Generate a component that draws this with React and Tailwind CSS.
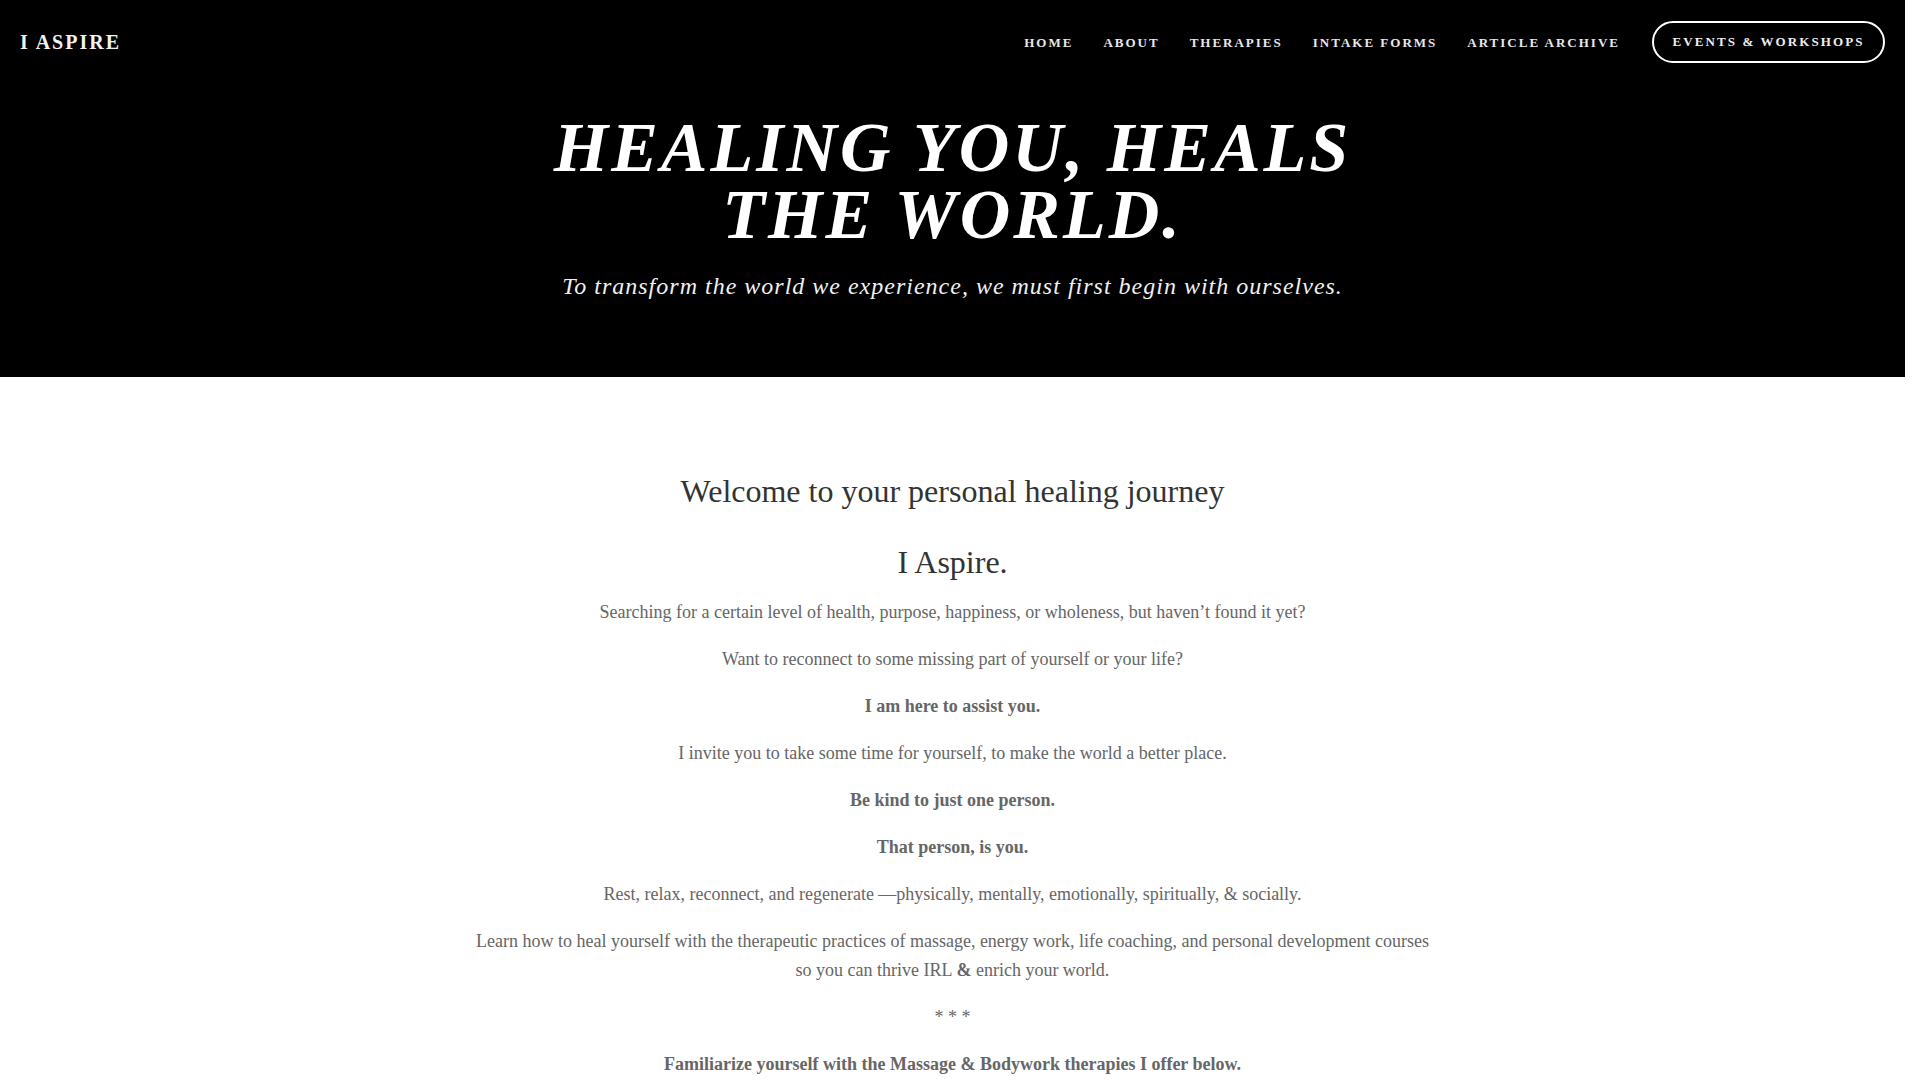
const navLinks = ["Home", "About", "Therapies", "Intake Forms", "Article Archive"];

const Header = () => {
  return (
    <header className="bg-black text-white">
      <nav className="flex items-center justify-between h-[84px] pl-[20px] pr-[20px]">
        <a href="#" className="text-[20px] font-bold tracking-[2px] text-[#f2f2f2] uppercase">
          I Aspire
        </a>
        <div className="flex items-center">
          <ul className="flex items-center gap-[30px] mr-[32px]">
            {navLinks.map((link) => (
              <li key={link}>
                <a
                  href="#"
                  className="text-[13px] font-bold uppercase tracking-[2px] text-[#e8e8e8]"
                >
                  {link}
                </a>
              </li>
            ))}
          </ul>
          <a
            href="#"
            className="flex items-center justify-center h-[42px] w-[233px] rounded-full border-2 border-white text-[13px] font-bold uppercase tracking-[2.1px] text-[#eee]"
          >
            Events &amp; Workshops
          </a>
        </div>
      </nav>

      <div className="flex flex-col items-center pt-[30px] pb-[73px] text-center">
        <h1 className="text-[70px] leading-[67px] font-bold italic uppercase tracking-[3px]">
          Healing you, heals
          <br />
          the world.
        </h1>
        <p className="mt-[20px] text-[24px] leading-[36px] italic tracking-[1px] text-[#f0f0f0]">
          To transform the world we experience, we must first begin with ourselves.
        </p>
      </div>
    </header>
  );
};

const Intro = () => {
  return (
    <section className="flex flex-col items-center text-center pt-[94px] pb-[80px]">
      <div className="w-[960px] flex flex-col items-center">
        <h2 className="text-[32px] leading-[40px] text-[#333]">
          Welcome to your personal healing journey
        </h2>
        <h3 className="mt-[31px] text-[32px] leading-[40px] text-[#333]">I Aspire.</h3>

        <div className="mt-[16px] text-[18px] leading-[29px] text-[#666] flex flex-col gap-[18px]">
          <p>
            Searching for a certain level of health, purpose, happiness, or wholeness, but
            haven’t found it yet?
          </p>
          <p>Want to reconnect to some missing part of yourself or your life?</p>
          <p className="font-bold">I am here to assist you.</p>
          <p>I invite you to take some time for yourself, to make the world a better place.</p>
          <p className="font-bold">Be kind to just one person.</p>
          <p className="font-bold">That person, is you.</p>
          <p>
            Rest, relax, reconnect, and regenerate —physically, mentally, emotionally,
            spiritually, &amp; socially.
          </p>
          <p>
            Learn how to heal yourself with the therapeutic practices of massage, energy work,
            life coaching, and personal development courses so you can thrive IRL{" "}
            <span className="font-bold">&amp;</span> enrich your world.
          </p>
          <p>* * *</p>
          <p className="font-bold">
            Familiarize yourself with the Massage &amp; Bodywork therapies I offer below.
          </p>
        </div>
      </div>
    </section>
  );
};

const Therapies = () => {
  const items = ["Massage", "Energy Work", "Life Coaching"];
  return (
    <section className="flex justify-center gap-[40px] pb-[120px]">
      {items.map((item) => (
        <div key={item} className="w-[280px] h-[200px] bg-[#f4f4f4] flex items-center justify-center">
          <span className="text-[24px] text-[#333]">{item}</span>
        </div>
      ))}
    </section>
  );
};

export default function App() {
  // right gutter stands in for the page scrollbar seen in the screenshot
  return (
    <div className="h-screen overflow-y-scroll bg-white pr-[15px] font-['Liberation_Serif','Times_New_Roman',serif]">
      <Header />
      <Intro />
      <Therapies />
    </div>
  );
}
